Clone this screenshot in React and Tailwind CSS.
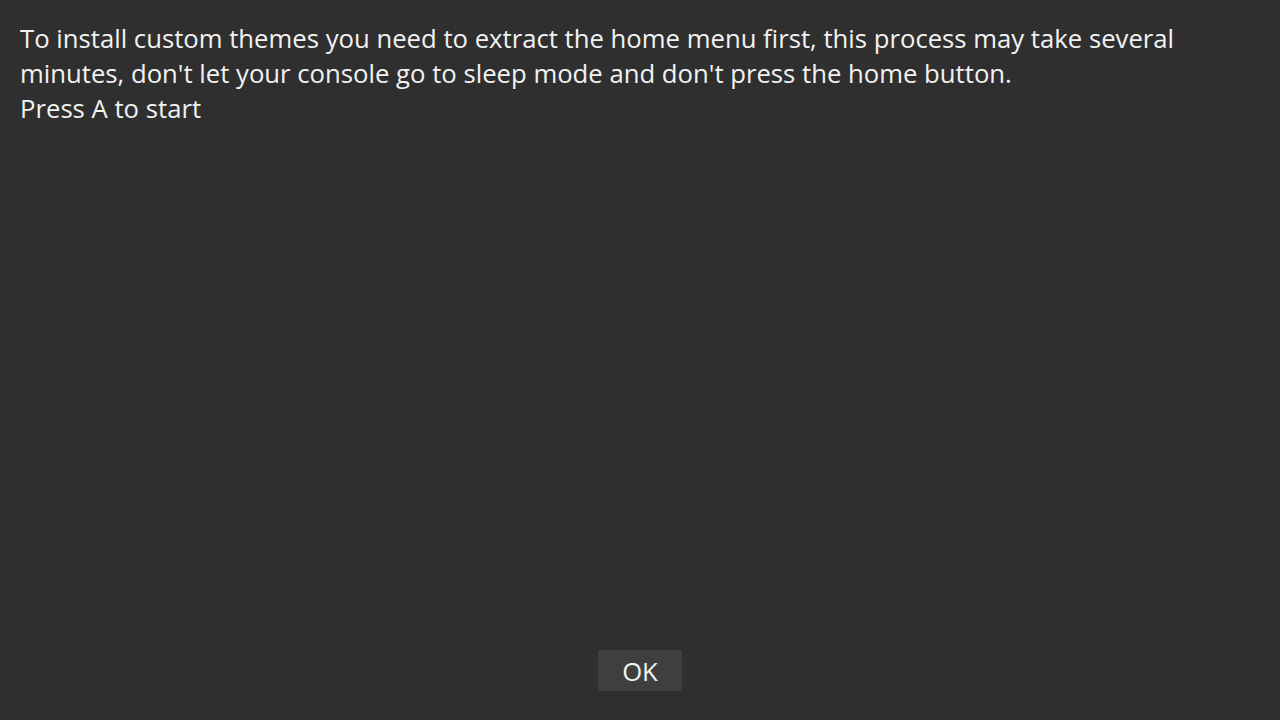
import React from 'react';

const App = () => {
  return (
    <div
      className="w-full h-screen flex flex-col bg-[#2f2f2f] text-[#f2f2f2] overflow-hidden"
      style={{ fontFamily: '"Open Sans", "Liberation Sans", sans-serif' }}
    >
      {/* Message */}
      <div className="px-5 pt-[21px] text-[25.7px] leading-[35px]">
        <p>
          To install custom themes you need to extract the home menu first, this process may take several
          minutes, don't let your console go to sleep mode and don't press the home button.
        </p>
        <p>Press A to start</p>
      </div>

      <div className="flex-1" />

      {/* Confirm button */}
      <div className="flex justify-center pb-[29px]">
        <button className="w-[84px] h-[41px] pt-[2px] bg-[#3f3f3f] text-[25.7px] leading-none text-[#f2f2f2] flex items-center justify-center">
          OK
        </button>
      </div>
    </div>
  );
};

export default App;
